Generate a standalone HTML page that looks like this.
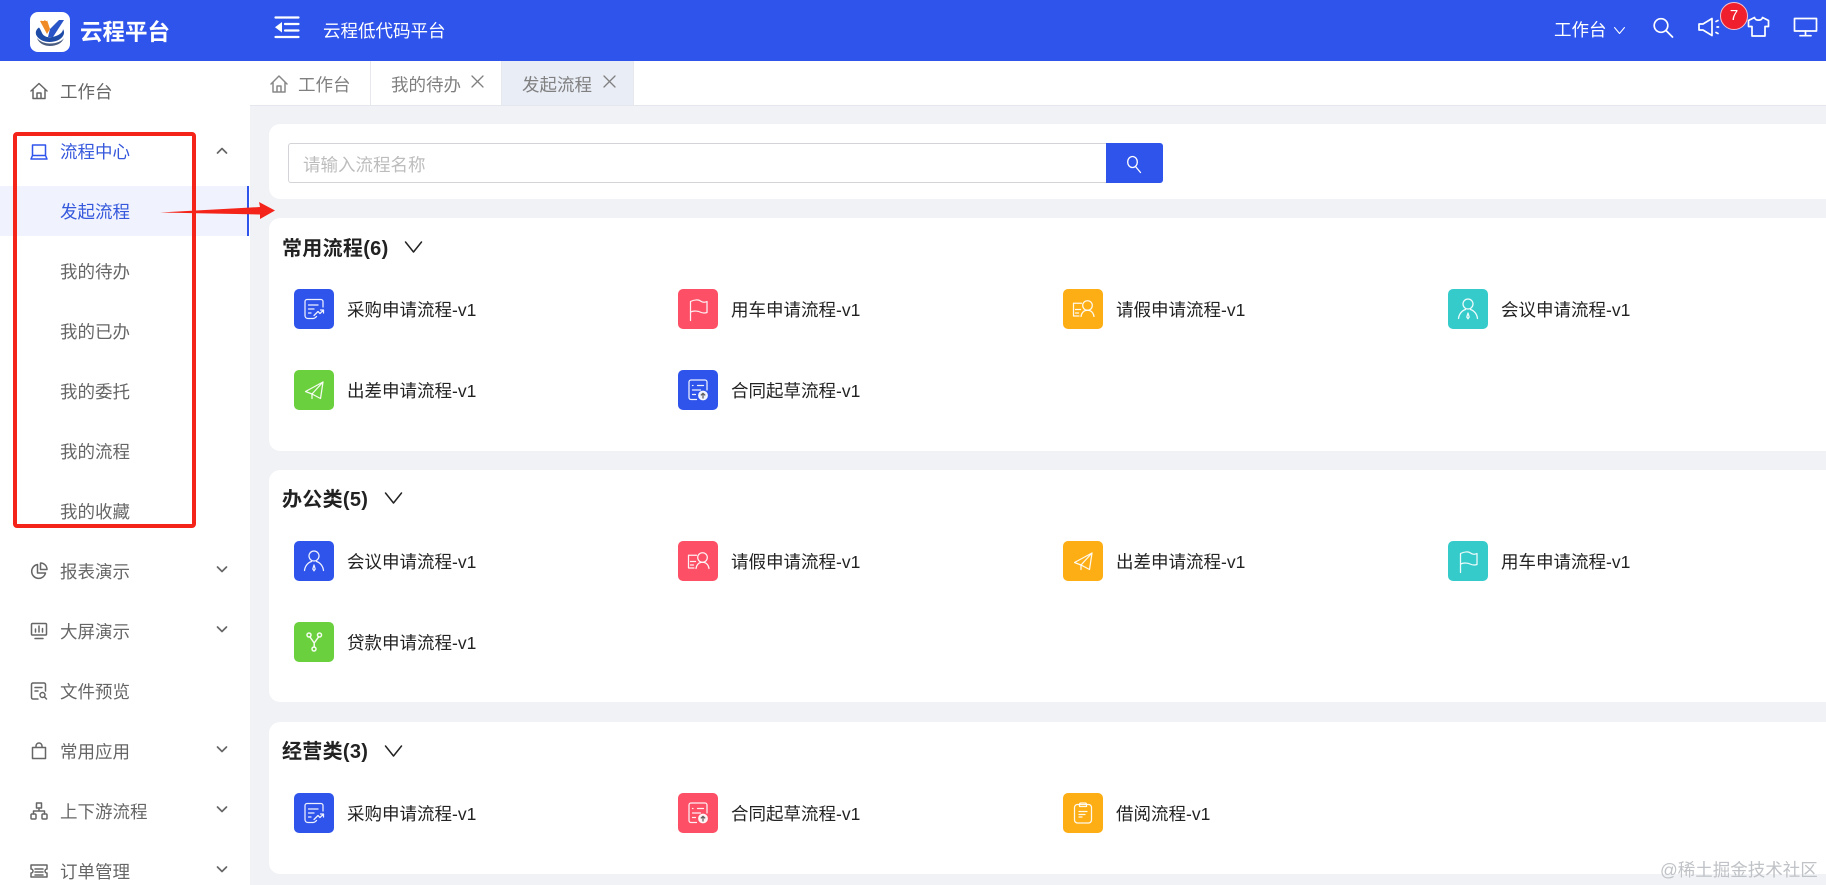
<!DOCTYPE html>
<html lang="zh-CN"><head><meta charset="utf-8"><title>云程平台</title>
<style>
*{box-sizing:border-box}
html,body{margin:0;padding:0;width:1826px;height:885px;overflow:hidden;background:#f0f2f5;font-family:"Liberation Sans","Noto Sans CJK SC",sans-serif}
.a{position:absolute}
.t{position:absolute;white-space:nowrap;line-height:24px;font-size:17.5px}
#hdr{left:0;top:0;width:1826px;height:61px;background:#2f54eb}
#side{left:0;top:61px;width:250px;height:824px;background:#fff}
#tabs{left:250px;top:61px;width:1576px;height:45px;background:#fff;border-bottom:1px solid #e4e7ed}
.tab{position:absolute;top:0;height:44px;border-right:1px solid #e6e8ee}
.card{position:absolute;left:269px;width:1557px;background:#fff;border-radius:11px 0 0 11px}
.m{left:60px;color:#666}
.ti{position:absolute;width:40px;height:40px;border-radius:5px}
.ti svg{display:block;width:40px;height:40px;fill:none;stroke:#fff;stroke-opacity:.92;stroke-width:1.25;stroke-linecap:round;stroke-linejoin:round}
.lb{color:#222}
.h{position:absolute;left:282px;font-size:20px;letter-spacing:.3px;font-weight:700;color:#222;line-height:26px;white-space:nowrap}
.b{background:#2f54eb}.r{background:#fd4f65}.o{background:#fdae14}.c{background:#36cbcb}.g{background:#6bd03d}
svg.i{position:absolute;fill:none;stroke:#666;stroke-width:1.5;stroke-linecap:round;stroke-linejoin:round}
svg.w{position:absolute;fill:none;stroke:#fff;stroke-width:1.7;stroke-linecap:round;stroke-linejoin:round}
</style></head><body>
<svg width="0" height="0" style="position:absolute">
<defs>
<symbol id="doc" viewBox="0 0 40 40"><path d="M29 18V12.500a2 2 0 0 0-2-2H13a2 2 0 0 0-2 2V26.500c0 2 1.500 3 3 3h5c2 0 2.500-1 3.500-2"/><path d="M14.500 16h9.500M14.500 20h5.500M14.500 24h2.500"/><path d="M20 26.500l4-4 2 2 3.500-3.500M26.500 21h3v3"/></symbol>
<symbol id="flag" viewBox="0 0 40 40"><path d="M12.500 31.500V12.500c4-2 8-2 10-.5s4.500 1.500 6.500.5v11c-3 1-5 .5-7-.5s-6-1.500-9.500 0"/></symbol>
<symbol id="leave" viewBox="0 0 40 40"><path d="M18.500 14.300h-8V27H16M12.500 20.500h5M12.500 24h3"/><circle cx="24.500" cy="16.500" r="4.800"/><path d="M18 27.500c.5-3.800 3-6.200 6.500-6.200s6 2.400 6.500 6.200"/></symbol>
<symbol id="person" viewBox="0 0 40 40"><circle cx="20" cy="15" r="5"/><path d="M10.500 29.500c.5-4.500 3.500-8 7-9M29.500 29.500c-.5-4.500-3.500-8-7-9"/><path d="M20 24l-1.200 4 1.200 1.800 1.200-1.800z"/></symbol>
<symbol id="plane" viewBox="0 0 40 40"><path d="M29 12L11.500 21.500l6.500 2.500 8.500 4.500z"/><path d="M29 12L18 24v4.500"/></symbol>
<symbol id="form" viewBox="0 0 40 40"><path d="M18.500 29.500H13a2 2 0 0 1-2-2V12a2 2 0 0 1 2-2h14a2 2 0 0 1 2 2v8"/><path d="M14.500 15.500h.5M19.500 15.500h6M14.500 20h8M14.500 24.500h3"/><circle cx="25" cy="25.500" r="4.300" fill="#fff" fill-opacity=".9"/><path d="M25 28v-4.500M23.200 25l1.800-1.700 1.800 1.700" stroke="#555"/></symbol>
<symbol id="branch" viewBox="0 0 40 40"><g stroke-width="1.500"><circle cx="15" cy="13" r="2"/><circle cx="25.500" cy="13" r="2"/><circle cx="20" cy="27" r="2"/><path d="M16 15l4.200 6 4.300-6M20.200 21v4"/></g></symbol>
<symbol id="clip" viewBox="0 0 40 40"><rect x="11.500" y="11.500" width="17" height="18.500" rx="3"/><path d="M16.500 11.500c0-1 .7-1.500 1.500-1.500h4c.8 0 1.500.5 1.500 1.500v2h-7z"/><path d="M16 18.500h8M16 21.500h6M16 24h3"/></symbol>
</defs></svg>

<div class="a" id="hdr"></div>
<div class="a" style="left:30px;top:12px;width:40px;height:40px;background:#fff;border-radius:8px"></div>
<svg class="a" style="left:30px;top:12px" width="40" height="40" viewBox="0 0 40 40"><path d="M10 9l7-1 3 9-3 5z" fill="#f08a24"/><path d="M12 7h2v2h-2zM15.500 7.500h1.500V9h-1.500z" fill="#fff"/><path d="M20 17l-2 8h5L34 8h-5z" fill="#2a55c8"/><path d="M9 15.500c-3 2-4 5-2.500 8 2.500 4.500 8 6.500 13 6.500 6 0 12-2.500 14-7 1-2.500.5-4-.5-6 0 3-3 5.500-7 7-4 1.500-9 2-12-.5-2.500-2-2.500-5-5-8z" fill="#1e4ba6"/><path d="M7 26c2 6 8 8 13 8 6 0 12-2.500 14-8-2 3-7 5.500-14 5.500-6 0-10-2-13-5.500z" fill="#4a5c80"/></svg>
<div class="t" style="left:80px;top:21px;font-size:22.5px;font-weight:700;color:#fff">云程平台</div>
<svg class="w" style="left:274px;top:15px;stroke-width:2.200" width="26" height="24" viewBox="0 0 26 24"><path d="M1.500 2.500h23M11 9h13.500M11 15.500h13.500M1.500 22h23"/><path d="M8 7v10.500L1 12.200z" fill="#fff" stroke="none"/></svg>
<div class="t" style="left:323px;top:19px;color:#fff">云程低代码平台</div>
<div class="t" style="left:1554px;top:18px;color:#fff">工作台</div>
<svg class="w" style="left:1613px;top:26px;stroke-width:1" width="13" height="9" viewBox="0 0 13 9"><path d="M1.500 1.500L6.500 7.500l5-6"/></svg>
<svg class="w" style="left:1652px;top:17px" width="22" height="21" viewBox="0 0 22 21"><circle cx="9" cy="8.500" r="6.800"/><path d="M14 13.500l6.500 6.500"/></svg>
<svg class="w" style="left:1698px;top:17px" width="24" height="20" viewBox="0 0 24 20"><path d="M1 7v6h4l9 5.500V1.500L5 7z"/><path d="M18 4.500l2-1M19 10h1.500M18 15.500l2 1"/></svg>
<svg class="w" style="left:1747px;top:16px" width="23" height="21" viewBox="0 0 23 21"><path d="M7.500 1.500L1.500 4.500v6H5V20h13v-9.500h3.500v-6l-6-3c-.5 3.500-7.500 3.500-8 0z"/></svg>
<svg class="w" style="left:1793px;top:17px" width="25" height="20" viewBox="0 0 25 20"><rect x="1.500" y="1.500" width="22" height="12.500"/><path d="M12.500 14v4.500M7 18.700h11"/></svg>
<div class="a" style="left:1720px;top:2px;width:28px;height:28px;border-radius:50%;background:#f01f2d;border:1px solid #f3c3cf;color:#fff;font-size:15px;line-height:26px;text-align:center">7</div>

<div class="a" id="side"></div>
<div class="a" style="left:0;top:186px;width:247px;height:50px;background:#f0f3fd"></div>
<div class="a" style="left:247px;top:186px;width:2px;height:50px;background:#2f54eb"></div>
<div class="t m" style="top:80px">工作台</div>
<div class="t m" style="top:140px;color:#3558dc">流程中心</div>
<div class="t m" style="top:200px;color:#3558dc">发起流程</div>
<div class="t m" style="top:260px">我的待办</div>
<div class="t m" style="top:320px">我的已办</div>
<div class="t m" style="top:380px">我的委托</div>
<div class="t m" style="top:440px">我的流程</div>
<div class="t m" style="top:500px">我的收藏</div>
<div class="t m" style="top:560px">报表演示</div>
<div class="t m" style="top:620px">大屏演示</div>
<div class="t m" style="top:680px">文件预览</div>
<div class="t m" style="top:740px">常用应用</div>
<div class="t m" style="top:800px">上下游流程</div>
<div class="t m" style="top:860px">订单管理</div>

<svg class="i" style="left:30px;top:82px" width="18" height="18" viewBox="0 0 18 18"><path d="M1 9l8-7.500L17 9M3 7.500V16.500h12V7.500M7 16.500v-5.500h4v5.500"/></svg>
<svg class="i" style="left:30px;top:143px;stroke:#2f54eb" width="18" height="18" viewBox="0 0 18 18"><path d="M2.500 2h13v10.500h-13zM1 16h16M2.500 12.500L1 16M15.500 12.500L17 16"/></svg>
<svg class="i" style="left:30px;top:562px" width="18" height="18" viewBox="0 0 18 18"><path d="M7.500 2.500a7 7 0 1 0 8 8.500H7.500z"/><path d="M10.500 1a6.500 6.500 0 0 1 6.500 6.500h-6.500z"/></svg>
<svg class="i" style="left:30px;top:622px" width="18" height="18" viewBox="0 0 18 18"><path d="M2.500 1.500h13a1 1 0 0 1 1 1V12a1 1 0 0 1-1 1h-13a1 1 0 0 1-1-1V2.500a1 1 0 0 1 1-1zM5 16.500h8M5.500 10V7M9 10V4M12.500 10V6.500"/></svg>
<svg class="i" style="left:30px;top:682px" width="18" height="18" viewBox="0 0 18 18"><path d="M8 17H3a1.500 1.500 0 0 1-1.500-1.500v-13A1.500 1.500 0 0 1 3 1h11a1.500 1.500 0 0 1 1.500 1.500V9M5 5.500h7M5 9h3"/><circle cx="12.500" cy="13" r="2.500"/><path d="M14.500 15l2 2"/></svg>
<svg class="i" style="left:30px;top:742px" width="18" height="18" viewBox="0 0 18 18"><path d="M2.500 5.500h13v11h-13zM6 5.500V4a3 3 0 0 1 6 0v1.500"/></svg>
<svg class="i" style="left:30px;top:802px" width="18" height="18" viewBox="0 0 18 18"><rect x="6.500" y="1" width="5" height="5"/><rect x="1" y="12" width="5" height="5" rx="1"/><rect x="12" y="12" width="5" height="5" rx="1"/><path d="M9 6v3M3.500 12V9h11v3"/></svg>
<svg class="i" style="left:30px;top:862px" width="18" height="18" viewBox="0 0 18 18"><path d="M1 3h16v4a2 2 0 0 0 0 4v4H1v-4a2 2 0 0 0 0-4zM5 7h8M5 10h8M5 13h8"/></svg>

<svg class="i" style="left:216px;top:146px;stroke-width:1.7" width="12" height="9" viewBox="0 0 12 9"><path d="M1.500 7L6 2.500 10.500 7"/></svg>
<svg class="i" style="left:216px;top:565px;stroke-width:1.7" width="12" height="9" viewBox="0 0 12 9"><path d="M1.500 2L6 6.500 10.500 2"/></svg>
<svg class="i" style="left:216px;top:625px;stroke-width:1.7" width="12" height="9" viewBox="0 0 12 9"><path d="M1.500 2L6 6.500 10.500 2"/></svg>
<svg class="i" style="left:216px;top:745px;stroke-width:1.7" width="12" height="9" viewBox="0 0 12 9"><path d="M1.500 2L6 6.500 10.500 2"/></svg>
<svg class="i" style="left:216px;top:805px;stroke-width:1.7" width="12" height="9" viewBox="0 0 12 9"><path d="M1.500 2L6 6.500 10.500 2"/></svg>
<svg class="i" style="left:216px;top:865px;stroke-width:1.7" width="12" height="9" viewBox="0 0 12 9"><path d="M1.500 2L6 6.500 10.500 2"/></svg>

<div class="a" id="tabs"></div>
<div class="tab" style="left:250px;top:61px;width:121px"></div>
<div class="tab" style="left:371px;top:61px;width:131px"></div>
<div class="tab" style="left:502px;top:61px;width:132px;background:#e9edf6"></div>
<svg class="i" style="left:270px;top:74px;stroke:#888" width="18" height="20" viewBox="0 0 18 20"><path d="M1 10l8-8 8 8M3 8.500V18h12V8.500M7 18v-6h4v6"/></svg>
<div class="t" style="left:298px;top:73px;color:#808080">工作台</div>
<div class="t" style="left:391px;top:73px;color:#808080">我的待办</div>
<div class="t" style="left:522px;top:73px;color:#808080">发起流程</div>
<svg class="i" style="left:471px;top:75px;stroke:#808080;stroke-width:1.3" width="13" height="13" viewBox="0 0 13 13"><path d="M1 1l11 11M12 1L1 12"/></svg>
<svg class="i" style="left:603px;top:75px;stroke:#808080;stroke-width:1.3" width="13" height="13" viewBox="0 0 13 13"><path d="M1 1l11 11M12 1L1 12"/></svg>

<div class="card" style="top:124px;height:75px"></div>
<div class="a" style="left:288px;top:143px;width:819px;height:40px;border:1px solid #d4d4d8;border-right:0;border-radius:3px 0 0 3px"></div>
<div class="t" style="left:303px;top:153px;color:#bdbdbd">请输入流程名称</div>
<div class="a" style="left:1106px;top:143px;width:57px;height:40px;background:#2f54eb;border-radius:0 3px 3px 0"></div>
<svg class="w" style="left:1125px;top:155px;stroke-width:1.3" width="19" height="19" viewBox="0 0 19 19"><ellipse cx="7.500" cy="7" rx="4.800" ry="5.500"/><path d="M10.500 11.500l5 6"/></svg>

<div class="card" style="top:218px;height:233px"></div>
<div class="card" style="top:470px;height:232px"></div>
<div class="card" style="top:722px;height:152px"></div>

<div class="h" style="top:236px">常用流程(6)</div>
<svg class="i" style="left:404px;top:240px;stroke:#222;stroke-width:1.5" width="19" height="14" viewBox="0 0 19 14"><path d="M1.500 2l8 10 8-10"/></svg>
<div class="h" style="top:487px">办公类(5)</div>
<svg class="i" style="left:384px;top:491px;stroke:#222;stroke-width:1.5" width="19" height="14" viewBox="0 0 19 14"><path d="M1.500 2l8 10 8-10"/></svg>
<div class="h" style="top:739px">经营类(3)</div>
<svg class="i" style="left:384px;top:744px;stroke:#222;stroke-width:1.5" width="19" height="14" viewBox="0 0 19 14"><path d="M1.500 2l8 10 8-10"/></svg>

<div class="ti b" style="left:294px;top:289px"><svg><use href="#doc"/></svg></div><div class="t lb" style="left:347px;top:298px">采购申请流程-v1</div>
<div class="ti r" style="left:678px;top:289px"><svg><use href="#flag"/></svg></div><div class="t lb" style="left:731px;top:298px">用车申请流程-v1</div>
<div class="ti o" style="left:1063px;top:289px"><svg><use href="#leave"/></svg></div><div class="t lb" style="left:1116px;top:298px">请假申请流程-v1</div>
<div class="ti c" style="left:1448px;top:289px"><svg><use href="#person"/></svg></div><div class="t lb" style="left:1501px;top:298px">会议申请流程-v1</div>
<div class="ti g" style="left:294px;top:370px"><svg><use href="#plane"/></svg></div><div class="t lb" style="left:347px;top:379px">出差申请流程-v1</div>
<div class="ti b" style="left:678px;top:370px"><svg><use href="#form"/></svg></div><div class="t lb" style="left:731px;top:379px">合同起草流程-v1</div>

<div class="ti b" style="left:294px;top:541px"><svg><use href="#person"/></svg></div><div class="t lb" style="left:347px;top:550px">会议申请流程-v1</div>
<div class="ti r" style="left:678px;top:541px"><svg><use href="#leave"/></svg></div><div class="t lb" style="left:731px;top:550px">请假申请流程-v1</div>
<div class="ti o" style="left:1063px;top:541px"><svg><use href="#plane"/></svg></div><div class="t lb" style="left:1116px;top:550px">出差申请流程-v1</div>
<div class="ti c" style="left:1448px;top:541px"><svg><use href="#flag"/></svg></div><div class="t lb" style="left:1501px;top:550px">用车申请流程-v1</div>
<div class="ti g" style="left:294px;top:622px"><svg><use href="#branch"/></svg></div><div class="t lb" style="left:347px;top:631px">贷款申请流程-v1</div>

<div class="ti b" style="left:294px;top:793px"><svg><use href="#doc"/></svg></div><div class="t lb" style="left:347px;top:802px">采购申请流程-v1</div>
<div class="ti r" style="left:678px;top:793px"><svg><use href="#form"/></svg></div><div class="t lb" style="left:731px;top:802px">合同起草流程-v1</div>
<div class="ti o" style="left:1063px;top:793px"><svg><use href="#clip"/></svg></div><div class="t lb" style="left:1116px;top:802px">借阅流程-v1</div>

<div class="a" style="left:12.5px;top:131.5px;width:183px;height:396px;border:4px solid #f4241a;border-radius:4px"></div>
<svg class="a" style="left:0;top:0" width="300" height="240"><path d="M160 212.500L260 207 259 202 275 210.500 260 219 260 214.500z" fill="#f4241a"/></svg>

<div class="t" style="left:1660px;top:858px;color:#bfc2c6">@稀土掘金技术社区</div>
</body></html>
